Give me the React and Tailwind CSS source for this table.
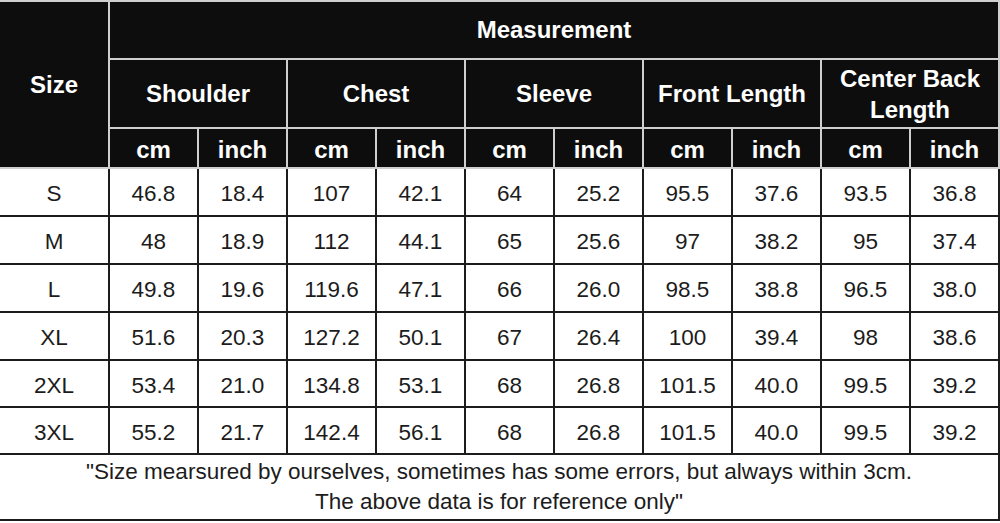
import React from "react";

const rows = [
  ["S", "46.8", "18.4", "107", "42.1", "64", "25.2", "95.5", "37.6", "93.5", "36.8"],
  ["M", "48", "18.9", "112", "44.1", "65", "25.6", "97", "38.2", "95", "37.4"],
  ["L", "49.8", "19.6", "119.6", "47.1", "66", "26.0", "98.5", "38.8", "96.5", "38.0"],
  ["XL", "51.6", "20.3", "127.2", "50.1", "67", "26.4", "100", "39.4", "98", "38.6"],
  ["2XL", "53.4", "21.0", "134.8", "53.1", "68", "26.8", "101.5", "40.0", "99.5", "39.2"],
  ["3XL", "55.2", "21.7", "142.4", "56.1", "68", "26.8", "101.5", "40.0", "99.5", "39.2"],
];

const groups = ["Shoulder", "Chest", "Sleeve", "Front Length", "Center Back Length"];

const head = "bg-[#0d0d0d] text-white font-bold border-2 border-[#cfcfcf] text-center";
const cell = "border-2 border-[#1c1c1c] text-center";

export default function App() {
  return (
    <div className="w-[1000px] h-[523px] bg-white font-['Liberation_Sans',Arial,sans-serif]">
      <table className="table-fixed border-collapse w-[999px]">
        <colgroup>
          <col className="w-[109px]" />
          {Array.from({ length: 10 }).map((_, i) => (
            <col key={i} className="w-[89px]" />
          ))}
        </colgroup>
        <thead>
          <tr className="h-[58px]">
            <th rowSpan={3} className={`${head} border-l-0 text-[24px]`}>
              Size
            </th>
            <th colSpan={10} className={`${head} text-[24px]`}>
              Measurement
            </th>
          </tr>
          <tr className="h-[69px]">
            {groups.map((g) => (
              <th key={g} colSpan={2} className={`${head} text-[24px] leading-[31px] px-3`}>
                {g}
              </th>
            ))}
          </tr>
          <tr className="h-[40px]">
            {groups.map((g) => (
              <React.Fragment key={g}>
                <th className={`${head} text-[24px] leading-[30px] pt-1`}>cm</th>
                <th className={`${head} text-[24px] leading-[30px] pt-1`}>inch</th>
              </React.Fragment>
            ))}
          </tr>
        </thead>
        <tbody className="text-[22.5px] text-[#1c1c1c]">
          {rows.map((r, n) => (
            <tr key={r[0]} className={n < 4 ? "h-[48px]" : "h-[47px]"}>
              {r.map((v, i) => (
                <td key={i} className={`${cell} leading-[30px] pt-1 ${i === 0 ? "border-l-0" : ""}`}>
                  {v}
                </td>
              ))}
            </tr>
          ))}
          <tr className="h-[66px]">
            <td colSpan={11} className={`${cell} border-l-0 leading-[30px] align-top pt-[2px]`}>
              "Size mearsured by ourselves, sometimes has some errors, but always within 3cm.
              <br />
              The above data is for reference only"
            </td>
          </tr>
        </tbody>
      </table>
    </div>
  );
}
